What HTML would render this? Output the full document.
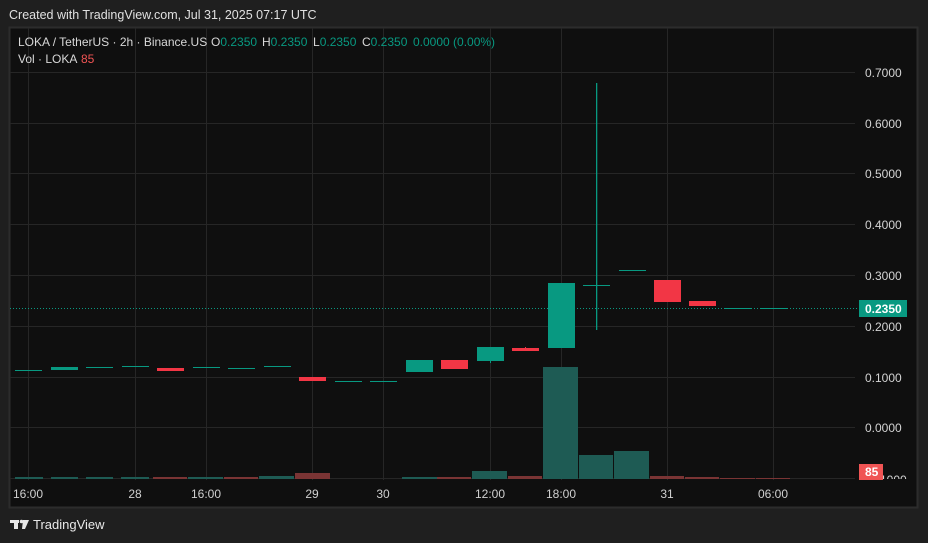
<!DOCTYPE html>
<html><head><meta charset="utf-8"><style>
body{margin:0;width:928px;height:543px;background:#1f1f1f;overflow:hidden;font-family:"Liberation Sans",sans-serif}
.t{position:absolute;color:#d8d8d8;font-size:12px}
</style></head><body>
<div class="t" style="left:9px;top:8px;font-size:12.5px;color:#e0e0e0">Created with TradingView.com, Jul 31, 2025 07:17 UTC</div>
<svg width="928" height="543" style="position:absolute;left:0;top:0" font-family="Liberation Sans, sans-serif">
<defs><clipPath id="c"><rect x="855" y="28" width="62" height="451"/></clipPath></defs>
<rect x="9.5" y="27.5" width="908" height="480" fill="#0f0f0f" stroke="#2c2c2c" stroke-width="2"/>
<g stroke="#262626" stroke-width="1">
<line x1="10" x2="855" y1="72.5" y2="72.5"/><line x1="10" x2="855" y1="123.5" y2="123.5"/>
<line x1="10" x2="855" y1="173.5" y2="173.5"/><line x1="10" x2="855" y1="224.5" y2="224.5"/>
<line x1="10" x2="855" y1="275.5" y2="275.5"/><line x1="10" x2="855" y1="326.5" y2="326.5"/>
<line x1="10" x2="855" y1="377.5" y2="377.5"/><line x1="10" x2="855" y1="427.5" y2="427.5"/>
<line x1="10" x2="855" y1="478.5" y2="478.5"/>
<line y1="28" y2="480" x1="28.5" x2="28.5"/><line y1="28" y2="480" x1="135.5" x2="135.5"/>
<line y1="28" y2="480" x1="206.5" x2="206.5"/><line y1="28" y2="480" x1="312.5" x2="312.5"/>
<line y1="28" y2="480" x1="383.5" x2="383.5"/><line y1="28" y2="480" x1="490.5" x2="490.5"/>
<line y1="28" y2="480" x1="561.5" x2="561.5"/><line y1="28" y2="480" x1="667.5" x2="667.5"/>
<line y1="28" y2="480" x1="773.5" x2="773.5"/>
</g>
<g fill="#1e5b54">
<rect x="15" y="477" width="28" height="2"/><rect x="51" y="477" width="27" height="2"/><rect x="86" y="477" width="27" height="2"/><rect x="121" y="477" width="28" height="2"/>
<rect x="188" y="477" width="35" height="2"/><rect x="259" y="476" width="35" height="3"/>
<rect x="402" y="477" width="35" height="2"/><rect x="472" y="471" width="35" height="8"/>
<rect x="543" y="367" width="35" height="112"/><rect x="579" y="455" width="34" height="24"/><rect x="614" y="451" width="35" height="28"/>
</g>
<g fill="#7a3434">
<rect x="153" y="477" width="34" height="2"/><rect x="224" y="477" width="34" height="2"/><rect x="295" y="473" width="35" height="6"/>
<rect x="437" y="477" width="34" height="2"/><rect x="508" y="476" width="34" height="3"/>
<rect x="650" y="476" width="34" height="3"/><rect x="685" y="477" width="34" height="2"/><rect x="720" y="478" width="35" height="1"/><rect x="756" y="478" width="34" height="1"/>
</g>
<line x1="10" x2="858" y1="308.5" y2="308.5" stroke="#0a9981" stroke-dasharray="1 2"/>
<g fill="#089981">
<rect x="15" y="370" width="27" height="1"/><rect x="51" y="367" width="27" height="3"/><rect x="86" y="367" width="27" height="1"/>
<rect x="122" y="366" width="27" height="1"/><rect x="193" y="367" width="27" height="1"/><rect x="228" y="368" width="27" height="1"/>
<rect x="264" y="366" width="27" height="1"/><rect x="335" y="381" width="27" height="1"/><rect x="370" y="381" width="27" height="1"/>
<rect x="406" y="360" width="27" height="12"/><rect x="477" y="347" width="27" height="14"/><rect x="490" y="360" width="1" height="3"/>
<rect x="548" y="283" width="27" height="65"/><rect x="596" y="83" width="1.3" height="247"/><rect x="583" y="285" width="27" height="1"/>
<rect x="619" y="270" width="27" height="1"/><rect x="725" y="308" width="27" height="1"/><rect x="760" y="308" width="27" height="1"/>
</g>
<g fill="#f23645">
<rect x="157" y="368" width="27" height="3"/><rect x="299" y="377" width="27" height="4"/><rect x="441" y="360" width="27" height="9"/>
<rect x="512" y="348" width="27" height="3"/><rect x="525" y="347" width="1" height="2"/>
<rect x="654" y="280" width="27" height="22"/><rect x="689" y="301" width="27" height="5"/>
</g>
<g fill="#d4d4d4" font-size="12">
<text x="865" y="77">0.7000</text><text x="865" y="128">0.6000</text><text x="865" y="178">0.5000</text>
<text x="865" y="229">0.4000</text><text x="865" y="280">0.3000</text><text x="865" y="331">0.2000</text>
<text x="865" y="382">0.1000</text><text x="865" y="432">0.0000</text>
<text x="876" y="484" clip-path="url(#c)">-1000</text>
</g>
<rect x="859" y="300" width="48" height="17" fill="#089981"/>
<text x="865" y="313" fill="#fff" font-size="12" font-weight="bold">0.2350</text>
<rect x="859" y="464" width="24" height="16" fill="#f05454"/>
<text x="865" y="476" fill="#fff" font-size="12" font-weight="bold">85</text>
<g fill="#d0d0d0" font-size="12" text-anchor="middle">
<text x="28" y="498">16:00</text><text x="135" y="498">28</text><text x="206" y="498">16:00</text>
<text x="312" y="498">29</text><text x="383" y="498">30</text><text x="490" y="498">12:00</text>
<text x="561" y="498">18:00</text><text x="667" y="498">31</text><text x="773" y="498">06:00</text>
</g>
<text y="46" font-size="12" fill="#d8d8d8"><tspan x="18">LOKA / TetherUS · 2h · Binance.US</tspan><tspan x="211">O</tspan><tspan fill="#089981">0.2350</tspan><tspan x="262">H</tspan><tspan fill="#089981">0.2350</tspan><tspan x="313">L</tspan><tspan fill="#089981">0.2350</tspan><tspan x="362">C</tspan><tspan fill="#089981">0.2350</tspan><tspan x="413" fill="#089981">0.0000 (0.00%)</tspan></text>
<text x="18" y="63" font-size="12" fill="#d8d8d8">Vol · LOKA <tspan x="81" fill="#f05454">85</tspan></text>
<g fill="#e8e8e8">
<rect x="10" y="520" width="9" height="3"/><rect x="14" y="520" width="4" height="9"/>
<circle cx="21.5" cy="521.5" r="1.8"/><path d="M23 520h6l-4 9h-3z"/>
</g>
<text x="33" y="529" font-size="13" fill="#e8e8e8">TradingView</text>
</svg>
</body></html>
